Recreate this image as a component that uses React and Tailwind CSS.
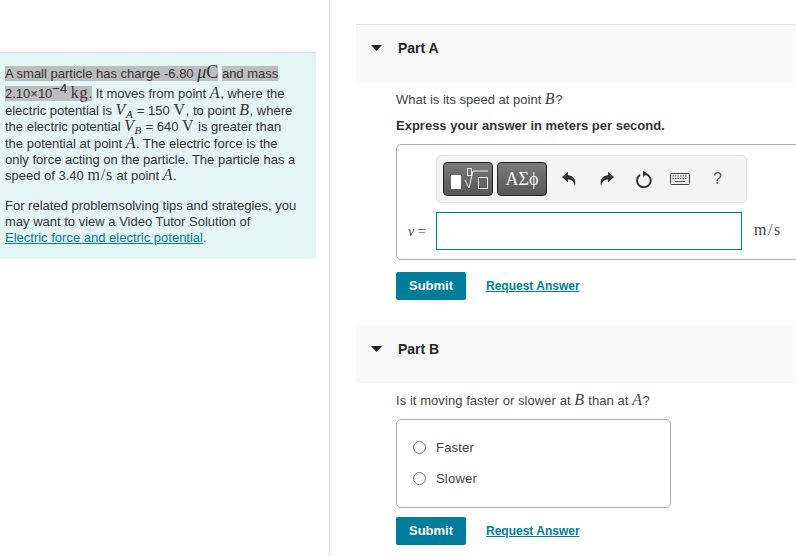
import React from 'react'

const serif = "font-['Liberation_Serif',serif]"

function M({ children }) {
  return <span className={`${serif} italic text-[16px] leading-[0] tracking-[0.6px]`}>{children}</span>
}

function U({ children }) {
  return <span className={`${serif} font-normal text-[16px] leading-[0] tracking-[0.8px]`}>{children}</span>
}

function Mark({ children, className = '' }) {
  return <span className={`bg-[#bdbdbd] ${className}`}>{children}</span>
}

function PartHeader({ label }) {
  return (
    <div className="h-[57px] bg-[#f9f9f9] flex items-start pl-[15px] pt-[15px] text-[#272727]">
      <svg width="11" height="6" viewBox="0 0 11 6" className="mt-[5px] shrink-0">
        <path d="M0 0H11L5.5 6Z" fill="#222" />
      </svg>
      <span className="ml-[16px] text-[14px] leading-[17px] font-bold">{label}</span>
    </div>
  )
}

function SubmitRow() {
  return (
    <div className="flex items-center">
      <button className="w-[70px] h-[28px] bg-[#007c9c] rounded-[2px] text-white text-[13px] font-bold">Submit</button>
      <a className="ml-[20px] text-[12px] font-bold text-[#007c9c] underline">Request Answer</a>
    </div>
  )
}

function Radio({ label }) {
  return (
    <div className="h-[31px] flex items-center">
      <span className="w-[13px] h-[13px] rounded-full border border-[#777] bg-white" />
      <span className="ml-[10px] text-[13px] tracking-[0.2px] text-[#444]">{label}</span>
    </div>
  )
}

function MathToolbar() {
  return (
    <div className="ml-[39px] w-[311px] h-[48px] bg-[#f4f4f4] border border-[#e4e4e4] rounded-[5px] flex items-center pl-[6px]">
      <div className="w-[50px] h-[34px] rounded-[4px] border border-[#222] bg-gradient-to-b from-[#7b7b7b] to-[#565656]">
        <svg width="48" height="32" viewBox="0 0 48 32">
          <rect x="7" y="12" width="10" height="14" fill="#fff" />
          <rect x="23.5" y="5.5" width="4" height="7" fill="none" stroke="#e4e4e4" />
          <path d="M21 17L25 25L29 8H44" fill="none" stroke="#f0f0f0" />
          <rect x="34.5" y="14.5" width="9" height="11" fill="none" stroke="#e4e4e4" />
        </svg>
      </div>
      <div className={`ml-[4px] w-[50px] h-[34px] rounded-[4px] border border-[#222] bg-gradient-to-b from-[#7b7b7b] to-[#565656] text-[#eee] text-[18px] flex items-center justify-center ${serif}`}>
        ΑΣϕ
      </div>
      <svg width="16" height="16" viewBox="0 0 16 16" className="ml-[14px]">
        <path d="M1 6L7 1V4.2C12 4.2 15.5 8 14 15C13 11 11 8.5 7 8.5V11.5Z" fill="#333" />
      </svg>
      <svg width="16" height="16" viewBox="0 0 16 16" className="ml-[22px]">
        <path d="M15 6L9 1V4.2C4 4.2 0.5 8 2 15C3 11 5 8.5 9 8.5V11.5Z" fill="#333" />
      </svg>
      <svg width="18" height="18" viewBox="0 0 18 18" className="ml-[20px]">
        <path d="M10.5 3.8A6.8 6.8 0 1 1 5 4.8" fill="none" stroke="#333" strokeWidth="1.9" />
        <path d="M8 0.5L12.5 3.8L8 6.8Z" fill="#333" />
      </svg>
      <svg width="20" height="12" viewBox="0 0 20 12" className="ml-[17px]">
        <rect x="0.5" y="0.5" width="19" height="11" rx="1" fill="#e8e8e8" stroke="#444" />
        <path d="M2.5 3h15M2.5 5.5h15" stroke="#555" strokeDasharray="1.5 1" />
        <path d="M5 8.5h10" stroke="#555" />
      </svg>
      <span className="ml-[23px] text-[16px] text-[#555]">?</span>
    </div>
  )
}

export default function App() {
  return (
    <div className="w-[796px] h-[556px] overflow-hidden bg-white flex font-['Liberation_Sans',Arial,sans-serif]">
      <aside className="w-[330px] shrink-0 border-r border-[#d9d9d9] pt-[52px]">
        <div className="w-[316px] h-[207px] bg-[#e4f5f6] border-t border-[#dddddd] pt-[13px] pl-[5px] pr-[19px] text-[13px] leading-[16.4px] text-[#333]">
          <p>
            <Mark>A small particle has charge -6.80 <span className={`${serif} text-[18px] leading-[0]`}><i>μ</i>C</span></Mark> <Mark>and mass</Mark>
            <br />
            <Mark>2.10×10<span className="align-[5px] leading-[14px]">−4</span> <U>kg</U>.</Mark> It moves from point <M>A</M>, where the electric potential is <M>V<sub className="text-[11px] leading-[0]">A</sub></M> = 150 <U>V</U>, to point <M>B</M>, where the electric potential <M>V<sub className="text-[11px] leading-[0]">B</sub></M> = 640 <U>V</U> is greater than the potential at point <M>A</M>. The electric force is the only force acting on the particle. The particle has a speed of 3.40 <U>m/s</U> at point <M>A</M>.
          </p>
          <p className="mt-[13px] leading-[16px]">
            For related problemsolving tips and strategies, you may want to view a Video Tutor Solution of
            <br />
            <a className="text-[#007c9c] underline">Electric force and electric potential</a>.
          </p>
        </div>
      </aside>

      <main className="flex-1 min-w-0 pl-[26px] pt-[24px]">
        <div className="border-t border-[#e2e2e2]">
          <PartHeader label="Part A" />
        </div>
        <div className="pl-[40px]">
          <p className="mt-[9px] text-[13px] leading-[17px] text-[#444]">What is its speed at point <M>B</M>?</p>
          <p className="mt-[9px] text-[13px] leading-[17px] font-bold text-[#333]">Express your answer in meters per second.</p>
          <div className="mt-[10px] h-[116px] w-[420px] border border-[#aaa] rounded-[5px] pt-[10px]">
            <MathToolbar />
            <div className="mt-[9px] flex items-center">
              <span className={`w-[39px] pl-[11px] text-[14px] text-[#444] ${serif}`}><i>v</i> =</span>
              <div className="w-[306px] h-[38px] border border-[#007c9c] bg-white" />
              <span className={`ml-[12px] -mt-[2px] text-[16px] tracking-[1.6px] text-[#444] ${serif}`}>m/s</span>
            </div>
          </div>
          <div className="mt-[12px]">
            <SubmitRow />
          </div>
        </div>

        <div className="mt-[26px]">
          <PartHeader label="Part B" />
        </div>
        <div className="pl-[40px]">
          <p className="mt-[9px] text-[13px] leading-[17px] tracking-[0.06px] text-[#444]">Is it moving faster or slower at <M>B</M> than at <M>A</M>?</p>
          <div className="mt-[10px] w-[275px] h-[89px] border border-[#aaa] rounded-[5px] pl-[16px] pt-[12px]">
            <Radio label="Faster" />
            <Radio label="Slower" />
          </div>
          <div className="mt-[9px]">
            <SubmitRow />
          </div>
        </div>
      </main>
    </div>
  )
}
